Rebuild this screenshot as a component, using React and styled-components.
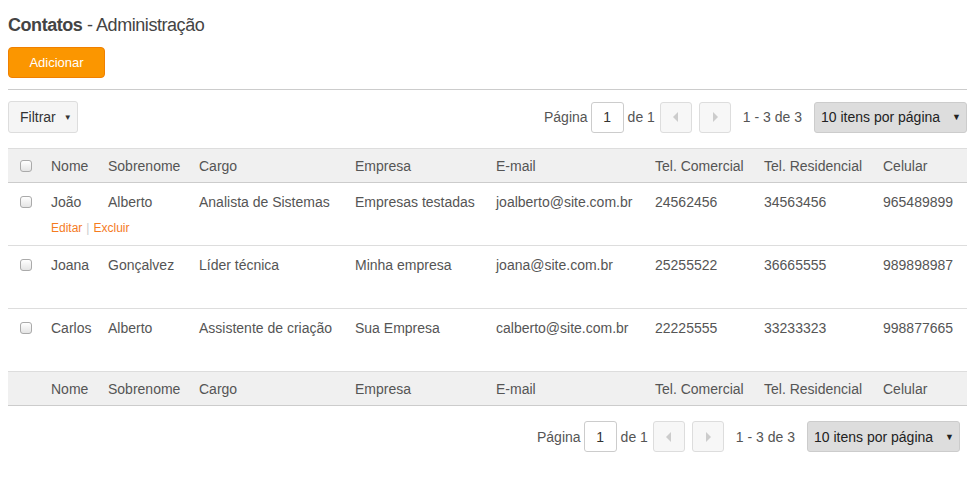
import styled, { createGlobalStyle } from "styled-components"

const Global = createGlobalStyle`
body {
margin: 0;
padding: 0 8px;
font-family: "Liberation Sans", Arial, sans-serif;
color: #555;
background: #fff;
}
`

const Title = styled.h1`
font-size: 18px;
letter-spacing: -0.45px;
font-weight: normal;
color: #444;
margin: 0;
padding: 15px 0 11px 0;
line-height: 21px;
b {
font-weight: bold;
}
`

const AddButton = styled.button`
width: 97px;
height: 31px;
background: #fb9600;
border: 1px solid #f08000;
border-radius: 4px;
color: #fff;
font-family: inherit;
font-size: 13px;
`

const Hr = styled.div`
border-top: 1px solid #ccc;
margin: 11px 0 11px 0;
`

const Toolbar = styled.div`
display: flex;
justify-content: space-between;
align-items: center;
margin-right: ${p => p.$right || 0}px;
`

const FilterButton = styled.button`
height: 32px;
width: 70px;
background: #f5f5f5;
border: 1px solid #ddd;
border-radius: 3px;
font-family: inherit;
font-size: 14px;
color: #333;
display: flex;
align-items: center;
gap: 8px;
padding: 0 0 0 11px;
span {
font-size: 8px;
}
`

const Pager = styled.div`
display: flex;
align-items: center;
font-size: 14px;
color: #555;
margin-left: auto;
`

const PageInput = styled.div`
width: 31px;
height: 29px;
border: 1px solid #ccc;
border-radius: 3px;
display: flex;
align-items: center;
justify-content: center;
color: #333;
margin: 0 4px 0 3px;
background: #fff;
`

const NavButton = styled.div`
width: 30px;
height: 29px;
border: 1px solid #ddd;
border-radius: 3px;
background: #f7f7f7;
display: flex;
align-items: center;
justify-content: center;
margin-left: ${p => p.$ml}px;
`

const Range = styled.span`
margin: 0 12px;
`

const Select = styled.div`
height: 29px;
background: #dddddd;
border: 1px solid #ccc;
border-radius: 3px;
display: flex;
align-items: center;
justify-content: space-between;
padding: 0 5px 0 6px;
box-sizing: content-box;
width: 140px;
color: #222;
span {
font-size: 9px;
}
`

const Table = styled.table`
width: 100%;
border-collapse: collapse;
table-layout: fixed;
margin: 15px 0 15px 0;
font-size: 14px;
`

const Th = styled.th`
background: #f0f0f0;
font-weight: normal;
text-align: left;
color: #555;
height: 33px;
padding: 0 8px;
border-top: 1px solid #ddd;
border-bottom: 1px solid #ccc;
white-space: nowrap;
`

const Td = styled.td`
vertical-align: top;
padding: 9px 8px 0 8px;
height: 53px;
color: #555;
border-bottom: 1px solid #ddd;
line-height: 20px;
white-space: nowrap;
`

const Check = styled.span`
display: block;
width: 10px;
height: 10px;
margin: ${p => p.$top || 0}px 0 0 4px;
border: 1px solid #aaa;
border-radius: 3px;
background: linear-gradient(#fff, #e4e4e4);
`

const Actions = styled.div`
font-size: 12px;
color: #f57c1f;
line-height: 14px;
margin-top: 9px;
i {
font-style: normal;
color: #ccc;
margin: 0 4px;
}
`

const Arrow = ({ dir }) => (
    <svg width="6" height="10" viewBox="0 0 6 10">
        {dir === "left"
            ? <polygon points="5,0 5,10 0,5" fill="#ccc" />
            : <polygon points="1,0 1,10 6,5" fill="#ccc" />}
    </svg>
)

const widths = [35, 57, 91, 156, 141, 159, 109, 119, 92]
const cols = ["Nome", "Sobrenome", "Cargo", "Empresa", "E-mail", "Tel. Comercial", "Tel. Residencial", "Celular"]

const DATA = [
    ["João", "Alberto", "Analista de Sistemas", "Empresas testadas", "joalberto@site.com.br", "24562456", "34563456", "965489899"],
    ["Joana", "Gonçalvez", "Líder técnica", "Minha empresa", "joana@site.com.br", "25255522", "36665555", "989898987"],
    ["Carlos", "Alberto", "Assistente de criação", "Sua Empresa", "calberto@site.com.br", "22225555", "33233323", "998877665"],
]

const Pagination = () => (
    <Pager>
        Página
        <PageInput>1</PageInput>
        de 1
        <NavButton $ml={5}><Arrow dir="left" /></NavButton>
        <NavButton $ml={7}><Arrow dir="right" /></NavButton>
        <Range>1 - 3 de 3</Range>
        <Select>10 itens por página<span>▼</span></Select>
    </Pager>
)

const App = () => {
    return (
        <>
            <Global />
            <Title><b>Contatos</b> - Administração</Title>
            <AddButton>Adicionar</AddButton>
            <Hr />
            <Toolbar>
                <FilterButton>Filtrar <span>▼</span></FilterButton>
                <Pagination />
            </Toolbar>
            <Table>
                <colgroup>
                    {widths.map((w, i) => <col key={i} style={{ width: w }} />)}
                </colgroup>
                <thead>
                    <tr>
                        <Th><Check /></Th>
                        {cols.map(c => <Th key={c}>{c}</Th>)}
                    </tr>
                </thead>
                <tbody>
                    {DATA.map((row, r) => (
                        <tr key={r}>
                            <Td><Check $top={4} /></Td>
                            {row.map((v, i) => (
                                <Td key={i}>
                                    {v}
                                    {r === 0 && i === 0 && (
                                        <Actions>Editar<i>|</i>Excluir</Actions>
                                    )}
                                </Td>
                            ))}
                        </tr>
                    ))}
                </tbody>
                <tfoot>
                    <tr>
                        <Th></Th>
                        {cols.map(c => <Th key={c}>{c}</Th>)}
                    </tr>
                </tfoot>
            </Table>
            <Toolbar $right={7}>
                <Pagination />
            </Toolbar>
        </>
    )
}

export default App
